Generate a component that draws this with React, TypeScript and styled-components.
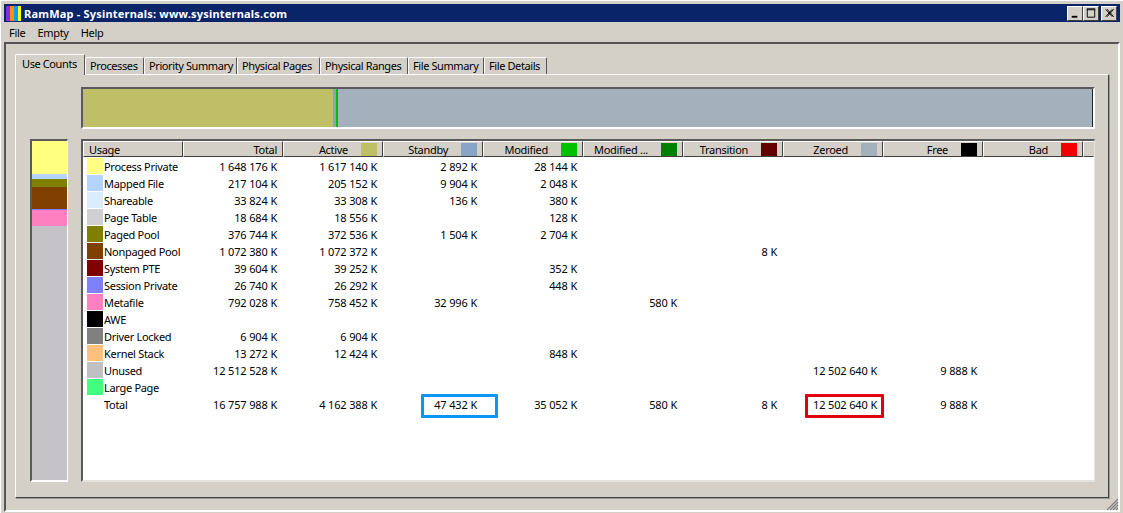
import styled, { createGlobalStyle } from "styled-components";

const FACE = "#d4d0c8";
const FONT = `"Noto Sans", sans-serif`;

const GlobalStyle = createGlobalStyle`
  html, body {
    margin: 0;
    padding: 0;
    background: ${FACE};
  }
  * {
    box-sizing: border-box;
  }
`;

type Row = {
  name: string;
  color?: string;
  values: string[];
};

const tabs = [
  { label: "Processes", width: 59 },
  { label: "Priority Summary", width: 93 },
  { label: "Physical Pages", width: 83 },
  { label: "Physical Ranges", width: 88 },
  { label: "File Summary", width: 76 },
  { label: "File Details", width: 63 },
];

const columns = [
  { label: "Active", color: "#bfbf68" },
  { label: "Standby", color: "#88a4c4" },
  { label: "Modified", color: "#00c000" },
  { label: "Modified ...", color: "#008000" },
  { label: "Transition", color: "#600000" },
  { label: "Zeroed", color: "#a4b0bc" },
  { label: "Free", color: "#000000" },
  { label: "Bad", color: "#f00000" },
];

const rows: Row[] = [
  { name: "Process Private", color: "#ffff80", values: ["1 648 176 K", "1 617 140 K", "2 892 K", "28 144 K"] },
  { name: "Mapped File", color: "#b4d4ff", values: ["217 104 K", "205 152 K", "9 904 K", "2 048 K"] },
  { name: "Shareable", color: "#dcecff", values: ["33 824 K", "33 308 K", "136 K", "380 K"] },
  { name: "Page Table", color: "#d0d0d4", values: ["18 684 K", "18 556 K", "", "128 K"] },
  { name: "Paged Pool", color: "#808000", values: ["376 744 K", "372 536 K", "1 504 K", "2 704 K"] },
  { name: "Nonpaged Pool", color: "#804000", values: ["1 072 380 K", "1 072 372 K", "", "", "", "8 K"] },
  { name: "System PTE", color: "#800000", values: ["39 604 K", "39 252 K", "", "352 K"] },
  { name: "Session Private", color: "#8080ff", values: ["26 740 K", "26 292 K", "", "448 K"] },
  { name: "Metafile", color: "#ff80c0", values: ["792 028 K", "758 452 K", "32 996 K", "", "580 K"] },
  { name: "AWE", color: "#000000", values: [] },
  { name: "Driver Locked", color: "#808080", values: ["6 904 K", "6 904 K"] },
  { name: "Kernel Stack", color: "#ffc080", values: ["13 272 K", "12 424 K", "", "848 K"] },
  { name: "Unused", color: "#c0c0c4", values: ["12 512 528 K", "", "", "", "", "", "12 502 640 K", "9 888 K"] },
  { name: "Large Page", color: "#40ff80", values: [] },
  { name: "Total", values: ["16 757 988 K", "4 162 388 K", "47 432 K", "35 052 K", "580 K", "8 K", "12 502 640 K", "9 888 K"] },
];

const legend = [
  { color: "#ffff80", height: 33 },
  { color: "#b4d4ff", height: 5 },
  { color: "#808000", height: 8 },
  { color: "#804000", height: 22 },
  { color: "#8080ff", height: 1 },
  { color: "#ff80c0", height: 16 },
];

// red and blue boxes drawn over the Total row, keyed by value column
const marks: Record<number, { color: string; left: number; width: number }> = {
  2: { color: "#0a96f5", left: 38, width: 77 },
  6: { color: "#e00010", left: 22, width: 79 },
};

export default function App() {
  return (
    <>
      <GlobalStyle />
      <Window>
        <TitleBar>
          <AppIcon viewBox="0 0 15 15" aria-hidden="true">
            <rect x="0" width="4" height="15" fill="#8030e0" />
            <rect x="4" width="4" height="15" fill="#ff9000" />
            <rect x="8" width="4" height="15" fill="#00a0ff" />
            <rect x="12" width="3" height="15" fill="#ffff00" />
          </AppIcon>
          <TitleText>RamMap - Sysinternals: www.sysinternals.com</TitleText>
          <CaptionButtons>
            <CaptionButton>
              <svg width="15" height="14" viewBox="0 0 15 14">
                <rect x="4" y="10" width="6" height="2" fill="#000" />
              </svg>
            </CaptionButton>
            <CaptionButton>
              <svg width="15" height="14" viewBox="0 0 15 14">
                <path d="M3 2.5h9M3 3.5h9M3.5 3v8.5h8V3" fill="none" stroke="#000" />
              </svg>
            </CaptionButton>
            <CaptionButton $gap>
              <svg width="15" height="14" viewBox="0 0 15 14">
                <path d="M4 3l7 8M5.5 3l7 8M11 3l-7 8M12.5 3l-7 8" fill="none" stroke="#000" />
              </svg>
            </CaptionButton>
          </CaptionButtons>
        </TitleBar>

        <MenuBar>
          <MenuItem>File</MenuItem>
          <MenuItem>Empty</MenuItem>
          <MenuItem>Help</MenuItem>
        </MenuBar>

        <Panel>
          <TabRow>
            <ActiveTab>Use Counts</ActiveTab>
            {tabs.map((tab) => (
              <Tab key={tab.label} $width={tab.width}>
                {tab.label}
              </Tab>
            ))}
          </TabRow>

          <Page>
            <UsageBar>
              <BarPart $color="#bfbf68" $width={250} />
              <BarPart $color="#88a4c4" $width={3} />
              <BarPart $color="#00c000" $width={2} />
              <BarPart $color="#a4b0bc" $grow />
            </UsageBar>

            <LegendBar>
              {legend.map((part) => (
                <LegendPart key={part.color} $color={part.color} $height={part.height} />
              ))}
              <LegendRest />
            </LegendBar>

            <List>
              <Header>
                <HeaderCell $first>Usage</HeaderCell>
                <HeaderCell>Total</HeaderCell>
                {columns.map((col) => (
                  <HeaderCell key={col.label}>
                    <HeaderLabel>{col.label}</HeaderLabel>
                    <Swatch $color={col.color} />
                  </HeaderCell>
                ))}
                <HeaderStub />
              </Header>

              <Rows>
                {rows.map((row) => (
                  <DataRow key={row.name}>
                    <NameCell>
                      <RowSwatch $color={row.color} />
                      {row.name}
                    </NameCell>
                    {Array.from({ length: 9 }, (_, i) => {
                      const mark = row.name === "Total" ? marks[i] : undefined;
                      return (
                        <ValueCell key={i}>
                          {row.values[i] ?? ""}
                          {mark && <Mark $color={mark.color} $left={mark.left} $width={mark.width} />}
                        </ValueCell>
                      );
                    })}
                  </DataRow>
                ))}
              </Rows>
            </List>
          </Page>
        </Panel>

        <Grip viewBox="0 0 13 13" aria-hidden="true">
          <path d="M1 12L12 1M4 12L12 4M7 12L12 7M10 12L12 10" stroke="#808080" strokeWidth="1.2" fill="none" />
        </Grip>
      </Window>
    </>
  );
}

const Window = styled.div`
  position: relative;
  width: 1123px;
  height: 513px;
  overflow: hidden;
  padding: 4px 3px 1px 4px;
  background: ${FACE};
  font-family: ${FONT};
  font-size: 11px;
  color: #000;
  box-shadow: inset 1px 1px 0 #fff;
`;

const TitleBar = styled.div`
  display: flex;
  align-items: center;
  height: 18px;
  padding: 0 2px;
  background: #0a246a;
`;

const AppIcon = styled.svg`
  width: 15px;
  height: 15px;
  margin-right: 3px;
  flex: none;
`;

const TitleText = styled.span`
  flex: 1;
  color: #fff;
  font-weight: 700;
  font-size: 11px;
  letter-spacing: 0.2px;
  white-space: nowrap;
`;

const CaptionButtons = styled.div`
  display: flex;
  margin-right: 1px;
`;

const CaptionButton = styled.div<{ $gap?: boolean }>`
  width: 16px;
  height: 15px;
  margin-left: ${(p) => (p.$gap ? "2px" : "0")};
  background: ${FACE};
  border: 1px solid;
  border-color: #fff #404040 #404040 #fff;
  display: flex;
  align-items: center;
  justify-content: center;
`;

const MenuBar = styled.div`
  display: flex;
  align-items: center;
  height: 20px;
  padding-left: 5px;
  gap: 12px;
  letter-spacing: -0.3px;
`;

const MenuItem = styled.span``;

const Panel = styled.div`
  width: 1116px;
  height: 470px;
  padding: 10px 9px 0 9px;
  border: 2px solid;
  border-color: #555 #fff #fff #555;
`;

const TabRow = styled.div`
  display: flex;
  align-items: flex-end;
  height: 20px;
  letter-spacing: -0.4px;
`;

const Tab = styled.div<{ $width: number }>`
  position: relative;
  width: ${(p) => p.$width}px;
  height: 17px;
  padding-left: 4px;
  line-height: 15px;
  white-space: nowrap;
  border: 1px solid;
  border-bottom: none;
  border-color: #fff #555 transparent #fff;
  border-radius: 2px 2px 0 0;
  background: ${FACE};
`;

const ActiveTab = styled.div`
  position: relative;
  z-index: 1;
  width: 70px;
  height: 21px;
  margin-bottom: -1px;
  padding-left: 6px;
  line-height: 18px;
  white-space: nowrap;
  border: 1px solid;
  border-bottom: none;
  border-color: #fff #555 transparent #fff;
  border-radius: 2px 2px 0 0;
  background: ${FACE};
`;

const Page = styled.div`
  display: grid;
  grid-template-columns: 38px 1014px;
  grid-template-rows: 42px 343px;
  column-gap: 13px;
  row-gap: 10px;
  align-content: start;
  width: 1094px;
  height: 424px;
  padding: 12px 0 0 14px;
  border: 1px solid;
  border-color: #fff #444 #444 #fff;
  box-shadow: 1px 1px 0 #999;
`;

const UsageBar = styled.div`
  grid-column: 2;
  display: flex;
  border: 2px solid;
  border-color: #5a5a5a #fff #fff #5a5a5a;
  box-shadow: inset -1px 0 0 #222;
`;

const BarPart = styled.div<{ $color: string; $width?: number; $grow?: boolean }>`
  background: ${(p) => p.$color};
  width: ${(p) => (p.$width ? `${p.$width}px` : "auto")};
  flex: ${(p) => (p.$grow ? 1 : "none")};
  margin-right: ${(p) => (p.$grow ? "1px" : "0")};
`;

const LegendBar = styled.div`
  display: flex;
  flex-direction: column;
  border: solid;
  border-width: 2px 1px 2px 2px;
  border-color: #5a5a5a #fff #fff #5a5a5a;
`;

const LegendPart = styled.div<{ $color: string; $height: number }>`
  background: ${(p) => p.$color};
  height: ${(p) => p.$height}px;
  flex: none;
`;

const LegendRest = styled.div`
  flex: 1;
  background: #c4c2c6;
`;

const List = styled.div`
  display: flex;
  flex-direction: column;
  border: solid;
  border-width: 2px 1px 2px 2px;
  border-color: #5a5a5a #e4e2dc #e4e2dc #5a5a5a;
  background: #fff;
`;

const Header = styled.div`
  display: flex;
  height: 16px;
  flex: none;
  background: ${FACE};
`;

const HeaderCell = styled.div<{ $first?: boolean }>`
  display: flex;
  align-items: center;
  justify-content: ${(p) => (p.$first ? "flex-start" : "flex-end")};
  width: 100px;
  flex: none;
  padding: ${(p) => (p.$first ? "0 0 0 5px" : "0 5px 0 0")};
  border: 1px solid;
  border-color: #fff #404040 #404040 #fff;
  letter-spacing: -0.3px;
  white-space: nowrap;
`;

const HeaderLabel = styled.span`
  margin-right: 13px;
`;

const HeaderStub = styled.div`
  flex: 1;
  border: 1px solid;
  border-color: #fff transparent #404040 #fff;
`;

const Swatch = styled.i<{ $color: string }>`
  display: block;
  width: 16px;
  height: 13px;
  flex: none;
  background: ${(p) => p.$color};
`;

const Rows = styled.div`
  display: flex;
  flex-direction: column;
  padding-top: 1px;
`;

const DataRow = styled.div`
  display: grid;
  grid-template-columns: repeat(10, 100px);
  height: 17px;
  line-height: 17px;
`;

const NameCell = styled.div`
  display: flex;
  padding-left: 4px;
  letter-spacing: -0.3px;
  white-space: nowrap;
`;

const RowSwatch = styled.i<{ $color?: string }>`
  display: block;
  width: 16px;
  height: 16px;
  margin-right: 1px;
  flex: none;
  background: ${(p) => p.$color ?? "transparent"};
`;

const ValueCell = styled.div`
  position: relative;
  padding-right: 6px;
  text-align: right;
  letter-spacing: -0.2px;
  word-spacing: 0.2px;
  white-space: nowrap;
`;

const Mark = styled.span<{ $color: string; $left: number; $width: number }>`
  position: absolute;
  top: -2px;
  left: ${(p) => p.$left}px;
  width: ${(p) => p.$width}px;
  height: 24px;
  border: 3px solid ${(p) => p.$color};
  border-radius: 1px;
`;

const Grip = styled.svg`
  position: absolute;
  right: 4px;
  bottom: 2px;
  width: 13px;
  height: 13px;
`;
